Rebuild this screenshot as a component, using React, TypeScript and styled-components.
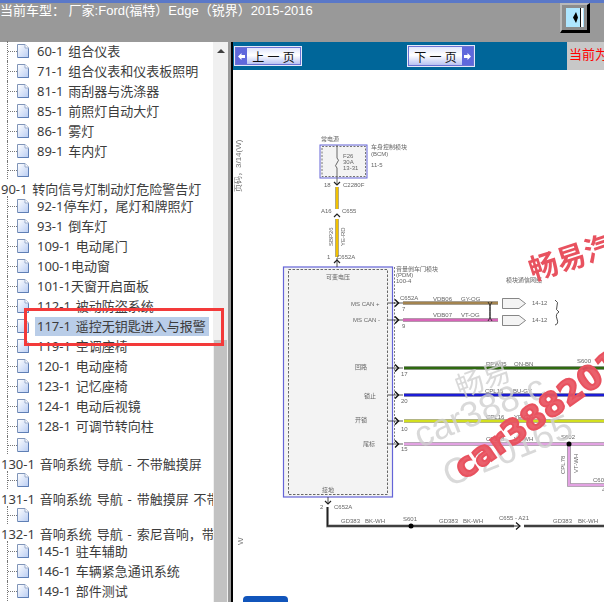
import { FC } from 'react';
import styled, { createGlobalStyle } from 'styled-components';

type TreeRow = { kind: 'leaf' | 'stub' | 'head'; label?: string; selected?: boolean };

const treeRows: TreeRow[] = [
  { kind: 'leaf', label: '60-1 组合仪表' },
  { kind: 'leaf', label: '71-1 组合仪表和仪表板照明' },
  { kind: 'leaf', label: '81-1 雨刮器与洗涤器' },
  { kind: 'leaf', label: '85-1 前照灯自动大灯' },
  { kind: 'leaf', label: '86-1 雾灯' },
  { kind: 'leaf', label: '89-1 车内灯' },
  { kind: 'stub' },
  { kind: 'head', label: '90-1 转向信号灯制动灯危险警告灯' },
  { kind: 'leaf', label: '92-1停车灯，尾灯和牌照灯' },
  { kind: 'leaf', label: '93-1 倒车灯' },
  { kind: 'leaf', label: '109-1 电动尾门' },
  { kind: 'leaf', label: '100-1电动窗' },
  { kind: 'leaf', label: '101-1天窗开启面板' },
  { kind: 'leaf', label: '112-1 被动防盗系统' },
  { kind: 'leaf', label: '117-1 遥控无钥匙进入与报警', selected: true },
  { kind: 'leaf', label: '119-1 空调座椅' },
  { kind: 'leaf', label: '120-1 电动座椅' },
  { kind: 'leaf', label: '123-1 记忆座椅' },
  { kind: 'leaf', label: '124-1 电动后视镜' },
  { kind: 'leaf', label: '128-1 可调节转向柱' },
  { kind: 'stub' },
  { kind: 'head', label: '130-1 音响系统 导航 - 不带触摸屏' },
  { kind: 'stub' },
  { kind: 'head', label: '131-1 音响系统 导航 - 带触摸屏 不带' },
  { kind: 'stub' },
  { kind: 'head', label: '132-1 音响系统 导航 - 索尼音响，带' },
  { kind: 'leaf', label: '145-1 驻车辅助' },
  { kind: 'leaf', label: '146-1 车辆紧急通讯系统' },
  { kind: 'leaf', label: '149-1 部件测试' },
];

// x, y, text of the small grey captions on the wiring diagram
const captions: [number, number, string][] = [
  [321, 141, '常电源'],
  [371, 149, '车身控制模块'],
  [371, 156, '(BCM)'],
  [371, 167, '11-5'],
  [343, 158, 'F26'],
  [343, 164, '30A'],
  [343, 170, '13-31'],
  [324, 187, '18'],
  [343, 187, 'C2280F'],
  [321, 213, 'A16'],
  [342, 213, 'C655'],
  [327, 259, '1'],
  [337, 259, 'C652A'],
  [326, 279, '可变电压'],
  [396, 271, '音量倒车门模块'],
  [396, 277, '(PDM)'],
  [396, 283, '100-4'],
  [506, 282, '模块通信网络'],
  [351, 306, 'MS CAN +'],
  [353, 322, 'MS CAN -'],
  [400, 300, 'C652A'],
  [402, 311, '7'],
  [402, 328, '9'],
  [433, 301, 'VDB06'],
  [461, 301, 'GY-OG'],
  [433, 317, 'VDB07'],
  [461, 317, 'VT-OG'],
  [532, 305, '14-12'],
  [532, 322, '14-12'],
  [486, 366, 'RPW05'],
  [514, 366, 'ON-BN'],
  [577, 363, 'S600'],
  [355, 369, '回路'],
  [401, 376, '17'],
  [364, 398, '锁止'],
  [401, 403, '20'],
  [485, 393, 'CPL15'],
  [513, 393, 'BU-GY'],
  [355, 422, '开锁'],
  [401, 431, '10'],
  [486, 419, 'CPL16'],
  [514, 419, 'YE-GN'],
  [363, 446, '尾标'],
  [401, 451, '15'],
  [486, 441, 'CPL78'],
  [514, 441, 'VT-WH'],
  [561, 439, 'S602'],
  [593, 482, 'C604'],
  [602, 492, '4'],
  [322, 492, '接地'],
  [320, 509, '2'],
  [334, 509, 'C652A'],
  [341, 523, 'GD383'],
  [365, 523, 'BK-WH'],
  [403, 521, 'S601'],
  [439, 523, 'GD383'],
  [463, 523, 'BK-WH'],
  [499, 520, 'C655  -  A21'],
  [553, 523, 'GD383'],
  [578, 523, 'BK-WH'],
];

const wires: [string, string][] = [
  ['M337 187V209', '#f2c200'],
  ['M337 219V257', '#f2c200'],
  ['M403 303H498', '#a3844f'],
  ['M403 320H498', '#d765b8'],
  ['M404 368H604', '#2f6a10'],
  ['M404 395H604', '#1c1cd6'],
  ['M404 421H604', '#d3e01e'],
  ['M404 444H604', '#e2a2e2'],
  ['M569 444V485H604', '#e2a2e2'],
];

const connectorRows = [303, 320, 368, 395, 421, 444];

const DocIcon: FC = () => (
  <svg width="12" height="14" viewBox="0 0 12 14">
    <defs>
      <linearGradient id="page" x1="0" y1="0" x2="1" y2="1">
        <stop offset="0" stopColor="#ffffff" />
        <stop offset="1" stopColor="#b9cdf3" />
      </linearGradient>
    </defs>
    <path d="M.5.5H8L11.5 4V13.5H.5Z" fill="url(#page)" stroke="#7f94b8" />
    <path d="M8 .5V4H11.5" fill="#fff" stroke="#9aaccc" />
    <path d="M1 13.5H11.5V5" fill="none" stroke="#5f7fb5" />
  </svg>
);

const PageArrow: FC<{ $dir: 'left' | 'right' }> = ({ $dir }) => (
  <ArrowCap>
    <svg width="9" height="9" viewBox="0 0 9 9">
      <path
        d={$dir === 'left' ? 'M1 4.500L4.500 1V3H8V6H4.500V8Z' : 'M8 4.500L4.500 1V3H1V6H4.500V8Z'}
        fill="#fff"
      />
    </svg>
  </ArrowCap>
);

const Schematic: FC = () => (
  <Drawing viewBox="233 70 371 532">
    {/* BCM block */}
    <rect x="320" y="145" width="47" height="33" fill="#f3f3f3" stroke="#6464d8" strokeWidth="1" />
    <rect x="322" y="146.500" width="43.500" height="30" fill="none" stroke="#555" strokeWidth=".8" strokeDasharray="2 1.500" />
    <path d="M337 145V158Q340 160 337 163T337 168V184" fill="none" stroke="#666" strokeWidth="1" />
    {/* PDM block */}
    <rect x="283.500" y="267" width="109" height="230" fill="#f3f3f3" stroke="#6464d8" strokeWidth="1.200" />
    <rect x="288.500" y="269.500" width="99" height="225" fill="none" stroke="#444" strokeWidth=".8" strokeDasharray="2.500 1.500" />
    <path d="M394.500 267V443" fill="none" stroke="#444" strokeWidth=".7" strokeDasharray="2 1.500" />
    {wires.map(([d, color]) => (
      <g key={d} fill="none">
        <path d={d} stroke="#8a8a8a" strokeWidth="3.600" />
        <path d={d} stroke={color} strokeWidth="2.400" />
      </g>
    ))}
    {connectorRows.map((y) => (
      <g key={y} fill="none" stroke="#111">
        <path d={`M388 ${y}H403`} strokeWidth=".7" />
        <path d={`M395 ${y - 3.500}L398.500 ${y}L395 ${y + 3.500}`} strokeWidth="1.400" />
      </g>
    ))}
    {/* vertical connectors on the feed */}
    <g fill="none" stroke="#222" strokeWidth="1.200">
      <path d="M334 182L337 185L340 182" />
      <path d="M334 217L337 214L340 217" />
      <path d="M334 263L337 260L340 263" />
      <path d="M337 258V267" strokeWidth=".8" />
      <path d="M325 501L328 504L331 501" />
      <path d="M328 497V504" strokeWidth=".8" />
    </g>
    {/* ground wire */}
    <path d="M327.500 507V526H604" fill="none" stroke="#9a9a9a" strokeWidth="2.800" />
    <path d="M327.500 507V526H604" fill="none" stroke="#222" strokeWidth="1.400" />
    <rect x="514" y="523" width="10" height="6" fill="#fff" />
    <path d="M516 522.500L520 526L516 529.500" fill="none" stroke="#111" strokeWidth="1.200" />
    <path d="M514 526H520" fill="none" stroke="#222" strokeWidth="1" />
    <circle cx="411" cy="526" r="2.500" fill="#000" />
    <circle cx="585" cy="368" r="2.500" fill="#000" />
    <circle cx="569" cy="444" r="2.500" fill="#000" />
    {/* twisted pair */}
    <path d="M488 302C493 308 487 315 492 321M492 302C487 308 493 315 488 321" fill="none" stroke="#222" strokeWidth=".9" />
    {/* off-page arrows */}
    <path d="M502.500 298.500H519L525.500 303.500L519 308.500H502.500Z" fill="#f4f4f4" stroke="#555" strokeWidth=".7" />
    <path d="M502.500 315.500H519L525.500 320.500L519 325.500H502.500Z" fill="#f4f4f4" stroke="#555" strokeWidth=".7" />
    <path d="M555 300Q559 302 557 306T559 312Q555 314 557 319T555 325" fill="none" stroke="#222" strokeWidth=".8" />

    {captions.map(([x, y, text]) => (
      <Caption key={`${x}-${y}`} x={x} y={y}>
        {text}
      </Caption>
    ))}
    <Caption transform="rotate(-90 333 246)" x="333" y="246">SBP26</Caption>
    <Caption transform="rotate(-90 345 246)" x="345" y="246">YE-RD</Caption>
    <Caption transform="rotate(-90 565 474)" x="565" y="474">CPL78</Caption>
    <Caption transform="rotate(-90 578 473)" x="578" y="473">VT-WH</Caption>
    <PageNote transform="rotate(-90 241 192)" x="241" y="192">页码，3/14(W)</PageNote>
    <PageNote transform="rotate(-90 243 545)" x="243" y="545">W</PageNote>

    {/* watermarks */}
    <GreyMark transform="rotate(-20 460 398)" x="460" y="398" $size={28}>畅易</GreyMark>
    <GreyMark transform="rotate(-22 420 448)" x="420" y="448" $size={36}>car388.c</GreyMark>
    <GreyMark transform="rotate(-22 449 487)" x="449" y="487" $size={36}>C 20165</GreyMark>
    <RedCjk transform="rotate(-18 533 281)" x="533" y="281">畅易汽</RedCjk>
    <RedLatin transform="rotate(-35 464 480)" x="464" y="480">car3882016</RedLatin>
  </Drawing>
);

const App: FC = () => (
  <>
    <GlobalStyle />
    <Page>
      <Header>
        <Title>当前车型： 厂家:Ford(福特）Edge（锐界）2015-2016</Title>
        <ToggleButton>
          <svg width="18" height="19" viewBox="0 0 18 19">
            <rect width="18" height="19" fill="#aee6ff" />
            <rect x="15" width="2" height="19" fill="#fff" />
            <rect x="14" width="1" height="19" fill="#111" />
            <path d="M10 4L12 9.500L10 15L7 9.500Z" fill="#000" />
          </svg>
        </ToggleButton>
      </Header>
      <Body>
        <Sidebar>
          <Tree>
            {treeRows.map((row, idx) =>
              row.kind === 'head' ? (
                <HeadRow key={idx}>{row.label}</HeadRow>
              ) : (
                <Row key={idx} $stub={row.kind === 'stub'}>
                  <Branch />
                  <DocIcon />
                  {row.label && <RowLabel $selected={row.selected}>{row.label}</RowLabel>}
                </Row>
              ),
            )}
          </Tree>
          <Scrollbar>
            <ScrollArrow />
            <ScrollThumb />
          </Scrollbar>
          <Marker />
        </Sidebar>
        <Splitter />
        <Content>
          <Toolbar>
            <NavGroup>
              <PageButton>
                <PageArrow $dir="left" />
                <ButtonText>上 一 页</ButtonText>
              </PageButton>
              <PageButton $tall>
                <ButtonText>下 一 页</ButtonText>
                <PageArrow $dir="right" />
              </PageButton>
            </NavGroup>
            <CurrentCell>当前为</CurrentCell>
          </Toolbar>
          <Sheet>
            <Schematic />
            <BottomTab />
          </Sheet>
        </Content>
      </Body>
    </Page>
  </>
);

export default App;

const GlobalStyle = createGlobalStyle`
  html, body {
    margin: 0;
    padding: 0;
    background: #fff;
    overflow: hidden;
  }
  * {
    box-sizing: border-box;
  }
`;

const Page = styled.div`
  width: 604px;
  height: 602px;
  display: flex;
  flex-direction: column;
  overflow: hidden;
  font-family: 'Liberation Sans', 'Noto Sans CJK SC', sans-serif;
`;

const Header = styled.header`
  height: 42px;
  flex: none;
  display: flex;
  justify-content: space-between;
  align-items: flex-start;
  padding-right: 14px;
  background: #999;
  border-top: 3px solid #5a78c8;
`;

const Title = styled.div`
  font-size: 13px;
  line-height: 16px;
  color: #fff;
  white-space: pre;
`;

const ToggleButton = styled.div`
  width: 30px;
  height: 30px;
  display: flex;
  padding: 3px 0 0 4px;
  background: #8c8c8c;
  border-style: solid;
  border-width: 2px 3px 3px 2px;
  border-color: #b8b8b8 #000 #000 #b8b8b8;
`;

const Body = styled.div`
  flex: 1;
  display: flex;
  min-height: 0;
`;

const Sidebar = styled.aside`
  position: relative;
  width: 228px;
  flex: none;
  display: flex;
  background: #fff;
`;

const Tree = styled.div`
  width: 213px;
  flex: none;
  margin-top: -1px;
  overflow: hidden;
  font-family: 'Noto Sans', 'Noto Sans CJK SC', sans-serif;
  font-size: 13px;
  word-spacing: 1.5px;
  color: #3c3c3c;
  white-space: nowrap;
`;

const Row = styled.div<{ $stub: boolean }>`
  height: ${(p) => (p.$stub ? 18 : 20)}px;
  display: flex;
  align-items: center;
`;

const Branch = styled.span`
  align-self: stretch;
  width: 10px;
  margin-left: 7px;
  display: flex;
  align-items: center;
  border-left: 1px dotted #777;

  &::after {
    content: '';
    width: 100%;
    border-top: 1px dotted #777;
  }
`;

const RowLabel = styled.span<{ $selected?: boolean }>`
  margin-left: 6px;
  padding: 0 2px;
  height: 19px;
  line-height: 19px;
  width: ${(p) => (p.$selected ? '174px' : 'auto')};
  background: ${(p) => (p.$selected ? '#b9cde8' : 'transparent')};
`;

const HeadRow = styled.div`
  height: 17px;
  padding: 2px 0 0 1px;
  line-height: 17px;
`;

const Scrollbar = styled.div`
  width: 15px;
  flex: none;
  display: flex;
  flex-direction: column;
  align-items: center;
  background: #f0f0f0;
`;

const ScrollArrow = styled.span`
  margin-top: 7px;
  width: 0;
  height: 0;
  border-left: 4px solid transparent;
  border-right: 4px solid transparent;
  border-bottom: 4px solid #404040;
`;

const ScrollThumb = styled.span`
  margin-top: auto;
  width: 13px;
  height: 262px;
  background: #c2c2c2;
`;

const Marker = styled.div`
  position: absolute;
  left: 24px;
  top: 266px;
  width: 200px;
  height: 38px;
  border: 3px solid #f33a3a;
`;

const Splitter = styled.div`
  width: 5px;
  flex: none;
  background: #999;
  border-right: 2px solid #000;
`;

const Content = styled.main`
  flex: 1;
  min-width: 0;
  display: flex;
  flex-direction: column;
`;

const Toolbar = styled.div`
  height: 28px;
  flex: none;
  display: flex;
  background: #006699;
`;

const NavGroup = styled.div`
  flex: 1;
  display: flex;
  align-items: center;
  gap: 107px;
  padding-left: 2px;
`;

const PageButton = styled.div<{ $tall?: boolean }>`
  width: 66px;
  height: ${(p) => (p.$tall ? 20 : 18)}px;
  display: flex;
  background: linear-gradient(#dfe4fb, #fff 45%, #b9c3f2);
  border: 1px solid #6a72d2;
  outline: 1px solid #e6e8fa;
`;

const ArrowCap = styled.span`
  width: 11px;
  flex: none;
  display: flex;
  align-items: center;
  justify-content: center;
  background: #5f68dc;
`;

const ButtonText = styled.span`
  flex: 1;
  display: flex;
  align-items: center;
  justify-content: center;
  font-size: 12px;
  color: #111;
  white-space: pre;
`;

const CurrentCell = styled.div`
  width: 37px;
  flex: none;
  overflow: hidden;
  padding-left: 2px;
  font-size: 13px;
  line-height: 26px;
  color: #f00;
  white-space: nowrap;
  background: #c8c8c8;
`;

const Sheet = styled.div`
  position: relative;
  flex: 1;
  min-height: 0;
  background: #fff;
`;

const Drawing = styled.svg`
  display: block;
  width: 371px;
  height: 532px;
  filter: blur(0.45px);
  font-family: 'Liberation Sans', 'Noto Sans CJK SC', sans-serif;
`;

const Caption = styled.text`
  font-size: 6px;
  fill: #666;
`;

const PageNote = styled.text`
  font-size: 8px;
  fill: #777;
`;

const GreyMark = styled.text<{ $size: number }>`
  font-size: ${(p) => p.$size}px;
  fill: #cfcfcf;
  fill-opacity: 0.8;
`;

const RedCjk = styled.text`
  font-size: 29px;
  font-weight: 700;
  fill: #e8525f;
`;

const RedLatin = styled.text`
  font-family: 'DejaVu Sans', sans-serif;
  font-size: 33px;
  font-weight: 700;
  fill: #e8525f;
  stroke: #e8525f;
  stroke-width: 2px;
  fill-opacity: 0.92;
`;

const BottomTab = styled.div`
  position: absolute;
  left: 10px;
  bottom: 0;
  width: 45px;
  height: 6px;
  background: #1155bb;
  border-radius: 4px 4px 0 0;
`;
